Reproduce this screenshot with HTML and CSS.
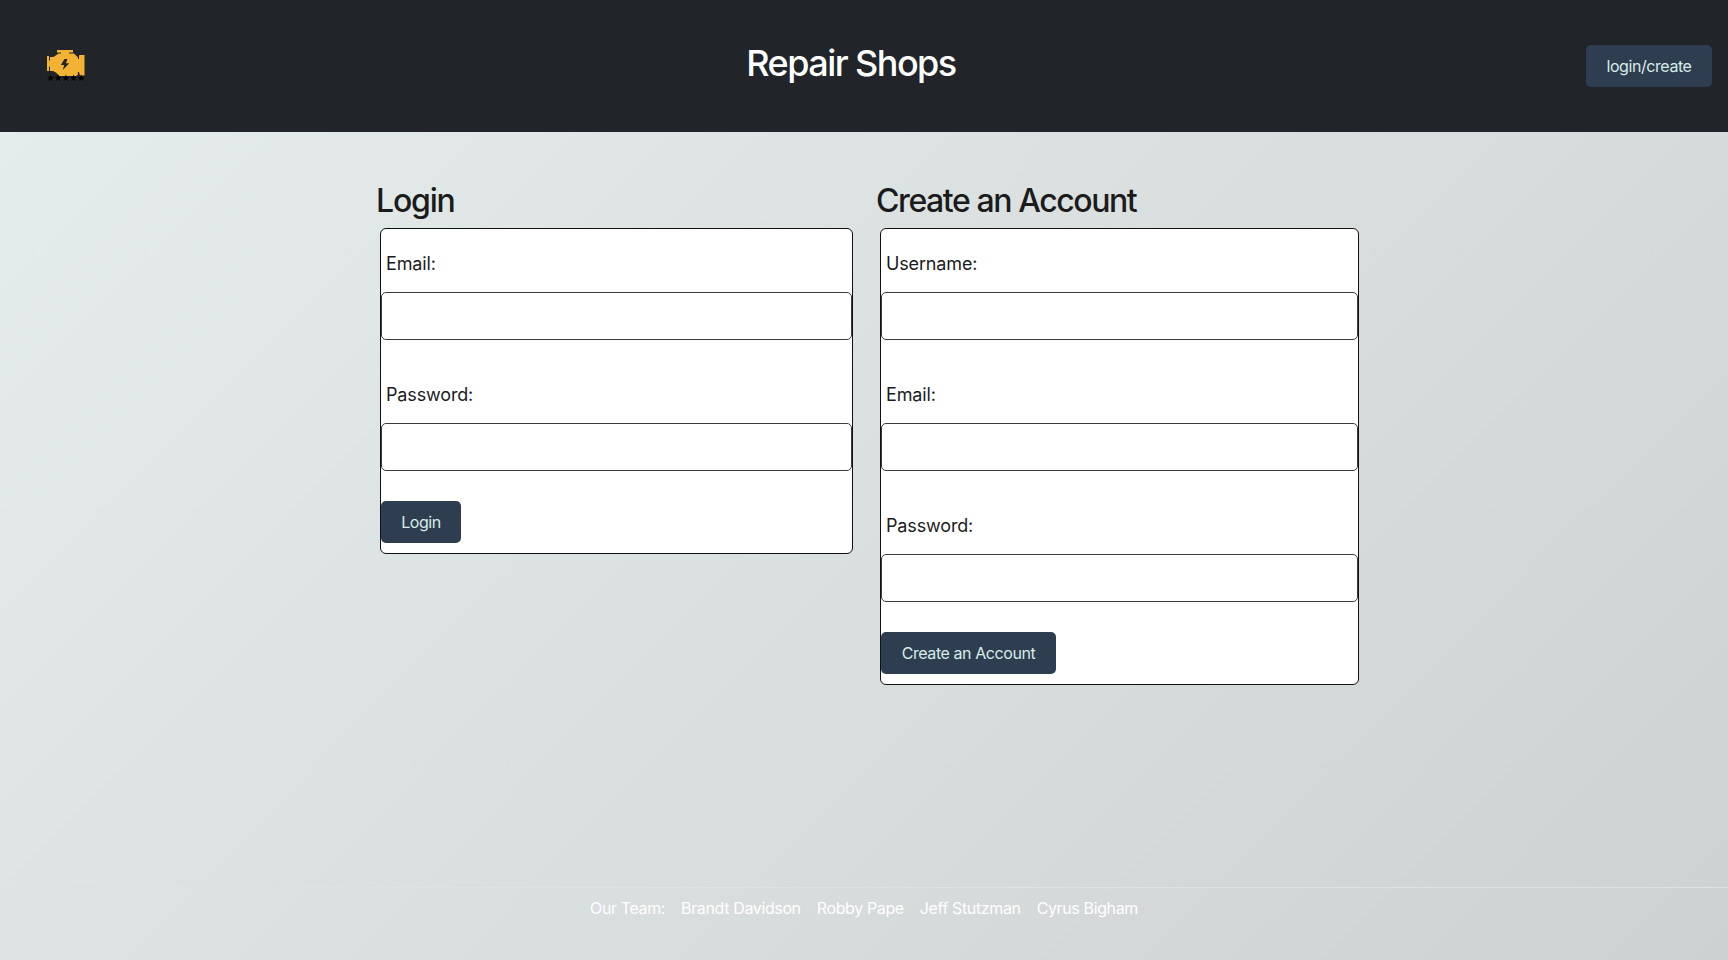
FILE: index.html
```html
<!DOCTYPE html>
<html lang="en">
<head>
<meta charset="utf-8">
<title>Repair Shops</title>
<link rel="stylesheet" href="styles.css">
</head>
<body>
<header class="header">
  <a class="logo" href="#" aria-label="Home">
    <svg class="logo-icon" viewBox="0 0 38 32" width="38" height="32">
      <path fill="#f2b234" d="M10 0h16v2.500h-4V3.500h5l4 4V9h1V5.500l1-.500h4.500v20.500H33L32 22h-1.200v3l-2 1H12.500L9 22.500 6 21H3v-4.500H2V21H0V6h2v4.500h1V7h3.500l5-3.500H14v-1h-4z"/>
      <path fill="#22252a" d="M17.500 9h3l-1.600 4.300h3.400L15.800 20l1.400-5h-3.400z"/>
      <path id="star" fill="#000" d="M3.500 24.500l.9 2.300 2.600.1-2 1.600.7 2.500-2.200-1.400L1.300 31l.7-2.500-2-1.600 2.600-.1z"/>
      <use href="#star" x="7.700"/><use href="#star" x="15.400"/><use href="#star" x="23.100"/><use href="#star" x="30.600"/>
    </svg>
  </a>
  <h1 class="title">Repair Shops</h1>
  <button class="btn btn-nav">login/create</button>
</header>
<main class="forms">
  <section class="panel panel-login">
    <h2 class="panel-title">Login</h2>
    <form class="card">
      <label class="label" for="le">Email:</label>
      <input class="field" id="le" type="email">
      <label class="label" for="lp">Password:</label>
      <input class="field" id="lp" type="password">
      <button class="btn btn-login" type="button">Login</button>
    </form>
  </section>
  <section class="panel panel-create">
    <h2 class="panel-title title-create">Create an Account</h2>
    <form class="card">
      <label class="label" for="cu">Username:</label>
      <input class="field" id="cu" type="text">
      <label class="label" for="ce">Email:</label>
      <input class="field" id="ce" type="email">
      <label class="label" for="cp">Password:</label>
      <input class="field" id="cp" type="password">
      <button class="btn btn-create" type="button">Create an Account</button>
    </form>
  </section>
</main>
<footer class="footer">
  <span>Our Team:</span>
  <span>Brandt Davidson</span>
  <span>Robby Pape</span>
  <span>Jeff Stutzman</span>
  <span>Cyrus Bigham</span>
</footer>
</body>
</html>
```
FILE: styles.css
```css
* { box-sizing: border-box; }
body {
  margin: 0;
  height: 960px;
  display: flex;
  flex-direction: column;
  font-family: Inter, "Liberation Sans", sans-serif;
  font-size: 16px;
  line-height: 24px;
  color: #1b1b1c;
  background: linear-gradient(135deg, #e6eeed 0%, #ced1d2 100%);
}
.header {
  height: 132px;
  flex: none;
  display: flex;
  align-items: center;
  justify-content: space-between;
  padding: 0 16px 0 47px;
  background: #212429;
}
.logo { display: flex; width: 69px; }
.logo-icon { display: block; }
.title {
  margin: 0 0 6px;
  font-size: 36px;
  line-height: 44px;
  font-weight: 550;
  letter-spacing: -1.55px;
  color: #fff;
}
.btn {
  height: 42px;
  padding: 0;
  border: 0;
  border-radius: 5px;
  background: #2e3e50;
  color: #d8ece8;
  font: 400 16px/24px Inter, "Liberation Sans", sans-serif;
  letter-spacing: -0.42px;
}
.btn-nav { width: 126px; }
.btn-login { width: 80px; }
.btn-create { width: 175px; }
.forms {
  flex: 1;
  display: flex;
  gap: 23px;
  align-items: flex-start;
  padding: 49px 0 0 376px;
}
.panel-login { width: 477px; }
.panel-create { width: 483px; }
.panel-title {
  margin: 0 0 8px;
  font-size: 32px;
  line-height: 39px;
  font-weight: 550;
  letter-spacing: -1.2px;
}
.title-create { letter-spacing: -1.42px; }
.card {
  margin-left: 4px;
  padding-bottom: 10px;
  border: 1px solid #111;
  border-radius: 6px;
  background: #fff;
}
.label {
  display: block;
  padding: 21px 5px 14px;
  font-size: 18px;
  line-height: 28px;
  letter-spacing: -0.15px;
}
.field {
  display: block;
  width: 100%;
  height: 48px;
  margin-bottom: 20px;
  padding: 0 12px;
  border: 1px solid #3c3c3f;
  border-radius: 5px;
  background: #fff;
}
.card .btn { display: block; margin-top: 30px; }
.footer {
  flex: none;
  height: 73px;
  display: flex;
  justify-content: center;
  gap: 16px;
  padding-top: 8px;
  border-top: 1px solid #dfe2e2;
  color: #fff;
  letter-spacing: -0.37px;
}
```
